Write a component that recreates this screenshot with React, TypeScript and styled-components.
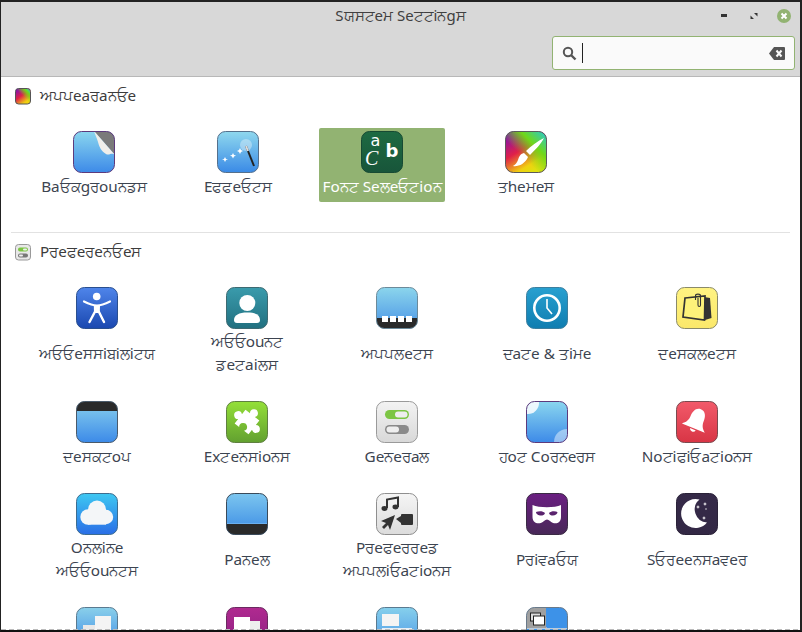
import React from 'react';
import styled, { createGlobalStyle } from 'styled-components';

const Global = createGlobalStyle`
  html, body { margin: 0; padding: 0; background: #fff; }
  #root { width: 802px; height: 632px; }
`;

const Win = styled.div`
  position: relative;
  width: 802px;
  height: 632px;
  box-sizing: border-box;
  display: flex;
  flex-direction: column;
  overflow: hidden;
  background: #fff;
  border-top: 2px solid #222;
  border-left: 1px solid #222;
  border-right: 2px solid #222;
  border-bottom: 2px solid #111;
  font-family: "Noto Sans", "Open Sans", sans-serif;
  font-size: 15.3px;
  color: #3c3c3c;
`;

const Header = styled.header`
  flex: none;
  height: 75px;
  box-sizing: border-box;
  background: #d8d8d8;
  border-bottom: 1px solid #b8b8b8;
  display: flex;
  flex-direction: column;
`;

const TitleBar = styled.div`
  height: 28px;
  display: grid;
  grid-template-columns: 1fr auto 1fr;
  align-items: center;
`;

const Title = styled.div`
  grid-column: 2;
  font-size: 15px;
  line-height: 20px;
  padding-bottom: 2px;
  color: #404040;
`;

const Controls = styled.div`
  grid-column: 3;
  justify-self: end;
  display: flex;
  align-items: center;
  gap: 14px;
  padding-right: 8px;
`;

const Ctl = styled.svg`
  display: block;
  width: 16px;
  height: 16px;
`;

const ToolBar = styled.div`
  display: flex;
  justify-content: flex-end;
  padding: 6px 5px 0 0;
`;

const Search = styled.div`
  width: 243px;
  height: 34px;
  box-sizing: border-box;
  background: #fafafa;
  border: 1px solid #92b372;
  border-radius: 3px;
  display: flex;
  align-items: center;
  padding: 0 9px;
`;

const Caret = styled.span`
  width: 1px;
  height: 20px;
  background: #222;
  margin-left: 5px;
  flex: none;
`;

const Spacer = styled.span`
  flex: 1;
`;

const Body = styled.main`
  flex: 1;
  min-height: 0;
`;

const SectionHead = styled.div<{ $top: number }>`
  display: flex;
  align-items: center;
  height: 20px;
  margin-top: ${p => p.$top}px;
  padding-left: 14px;
  gap: 8px;
  font-size: 15.2px;
  color: #3c3c3c;
`;

const HeadText = styled.span`
  line-height: 20px;
  padding-bottom: 2px;
`;

const Rule = styled.hr`
  border: 0;
  height: 1px;
  background: #e2e2e2;
  margin: 30px 10px 0 10px;
`;

const Grid = styled.div<{ $cell: number; $top: number }>`
  display: grid;
  grid-template-columns: repeat(auto-fill, ${p => p.$cell}px);
  column-gap: 18px;
  row-gap: 18px;
  margin-top: ${p => p.$top}px;
  padding-left: 30px;
  width: 770px;
  align-items: start;
`;

const Cell = styled.div<{ $on?: boolean }>`
  box-sizing: border-box;
  padding: 3px 0;
  border-radius: 2px;
  display: flex;
  flex-direction: column;
  align-items: center;
  background: ${p => (p.$on ? '#92b372' : 'transparent')};
  color: ${p => (p.$on ? '#fff' : '#3c4450')};
`;

const IconBox = styled.div`
  width: 42px;
  height: 42px;
  flex: none;
`;

const Label = styled.div<{ $lines: number }>`
  box-sizing: border-box;
  height: ${p => (p.$lines === 2 ? 47 : 24)}px;
  margin-top: ${p => (p.$lines === 2 ? 1 : 2)}px;
  padding-bottom: 1px;
  display: flex;
  align-items: center;
  justify-content: center;
  text-align: center;
  line-height: 23px;
  font-size: 15.3px;
  white-space: pre-line;
`;

const Dashed = styled.div`
  position: absolute;
  left: 0;
  right: 0;
  bottom: 0;
  height: 1px;
  background: repeating-linear-gradient(90deg, #bbb 0 5px, transparent 5px 8px);
`;

const Tile: React.FC<{ id: string; a: string; b: string; s: string; children?: React.ReactNode }> = ({ id, a, b, s, children }) => (
  <svg width="42" height="42" viewBox="0 0 42 42">
    <defs>
      <linearGradient id={id} x1="0" y1="0" x2="0" y2="1">
        <stop offset="0" stopColor={a} />
        <stop offset="1" stopColor={b} />
      </linearGradient>
      <clipPath id={id + 'c'}>
        <rect x="0.5" y="0.5" width="41" height="41" rx="8" />
      </clipPath>
    </defs>
    <rect x="0.5" y="0.5" width="41" height="41" rx="8" fill={`url(#${id})`} />
    <g clipPath={`url(#${id}c)`}>{children}</g>
    <rect x="0.5" y="0.5" width="41" height="41" rx="8" fill="none" stroke={s} />
  </svg>
);

const ic: Record<string, React.ReactNode> = {
  background: (
    <Tile id="bg" a="#8ad6ef" b="#3d8ae8" s="#5d3a7c">
      <path d="M21 0 L42 0 L42 24 Z" fill="#7a7a7a" />
      <path d="M21 0 L42 24 C38 21 36 25 33 23 C28 20 26 15 25 11 C24 7 22 4 21 0 Z" fill="#f0eeea" />
    </Tile>
  ),
  effects: (
    <Tile id="ef" a="#8fd8ee" b="#3a8ae6" s="#55708c">
      <circle cx="29" cy="14" r="6" fill="#fff" opacity=".35" />
      <path d="M29 15 L37 35" stroke="#222" strokeWidth="2" />
      <path d="M29 15 L31 20" stroke="#ddd" strokeWidth="2" />
      <path d="M8 26l1 2 2 0-2 1-1 2-1-2-2-1 2 0zM16 22l1 2 2 .5-2 1-1 2-1-2-2-1 2-.5zM23 17l1 2 2 1-2 1-1 2-1-2-2-1 2-1z" fill="#fff" />
    </Tile>
  ),
  font: (
    <Tile id="fo" a="#1d6a42" b="#18553a" s="#174a33">
      <text x="9.5" y="14.5" fontSize="16" fontFamily="DejaVu Sans, sans-serif" fill="#fff">a</text>
      <text x="4" y="34" fontSize="20" fontStyle="italic" fontFamily="Liberation Serif, serif" fill="#fff">C</text>
      <text x="24.5" y="26" fontSize="18" fontWeight="bold" fontFamily="DejaVu Sans, sans-serif" fill="#fff">b</text>
    </Tile>
  ),
  themes: (
    <Tile id="th" a="#6a10c0" b="#e02060" s="#5a5a5a">
      <defs>
        <linearGradient id="thx" x1="0" y1="0" x2=".6" y2="1">
          <stop offset="0" stopColor="#6a10c8" />
          <stop offset=".5" stopColor="#e02048" />
          <stop offset=".85" stopColor="#f0d010" />
          <stop offset="1" stopColor="#e0e010" />
        </linearGradient>
        <linearGradient id="thy" x1="0" y1="1" x2="1" y2="0">
          <stop offset=".4" stopColor="#70d818" stopOpacity="0" />
          <stop offset=".68" stopColor="#70d818" />
          <stop offset="1" stopColor="#20c8e0" />
        </linearGradient>
      </defs>
      <rect width="42" height="42" fill="url(#thx)" />
      <rect width="42" height="42" fill="url(#thy)" />
      <path d="M39 7 C33 10 26 15 21 20 L25 24 C30 19 36 13 39 7 Z M19 22 C15 23 14 26 13 29 C12 32 10 34 8 35 C13 36 20 33 23 26 Z" fill="#fff" />
    </Tile>
  ),
  access: (
    <Tile id="ac" a="#4f85ea" b="#1a48b0" s="#2a4f8f">
      <circle cx="20.7" cy="9.5" r="3.8" fill="#fff" />
      <path d="M8 14.5 C14 17.5 17 18.5 21 18.5 C25 18.5 28 17.5 34 14.5" fill="none" stroke="#fff" strokeWidth="2.2" strokeLinecap="round" />
      <path d="M17.8 18 L24 18 L23.8 26 L18 26 Z" fill="#fff" />
      <path d="M18.8 25 L13.5 35 M23 25 L28 35" fill="none" stroke="#fff" strokeWidth="2.4" strokeLinecap="round" />
    </Tile>
  ),
  account: (
    <Tile id="au" a="#3a9bac" b="#217080" s="#3d6a72">
      <circle cx="21.3" cy="16" r="8" fill="#fff" />
      <path d="M8 33 C8 28 13 25.5 21.3 25.5 C30 25.5 34 28 34 33 C34 35 33 36 31 36 L11 36 C9 36 8 35 8 33 Z" fill="#fff" />
    </Tile>
  ),
  applets: (
    <Tile id="ap" a="#8bd5ec" b="#4a94e6" s="#6c8a9a">
      <rect y="31" width="42" height="11" fill="#2a2a2a" />
      <rect x="6" y="29" width="6" height="6" fill="#fff" />
      <rect x="14" y="29" width="6" height="6" fill="#fff" />
      <rect x="22" y="29" width="6" height="6" fill="#fff" />
      <rect x="30" y="29" width="6" height="6" fill="#fff" />
    </Tile>
  ),
  date: (
    <Tile id="da" a="#28a0d0" b="#0f7db0" s="#3c7f9f">
      <circle cx="21" cy="21" r="12.7" fill="none" stroke="#fff" strokeWidth="2.6" />
      <path d="M21 12 L21 21 L26 27" fill="none" stroke="#fff" strokeWidth="1.6" />
    </Tile>
  ),
  desklets: (
    <Tile id="de" a="#fff382" b="#fbe86a" s="#8a8a6a">
      <path d="M28 10 L34 11 L35.5 31 L29 33 Z" fill="#333" />
      <path d="M9 11 L29 9 L28.5 33 L7 30 Z" fill="#fdf27a" stroke="#333" strokeWidth="1.7" />
      <path d="M19.5 13 L19.5 9 C19.5 6.5 24.5 6.5 24.5 9 L24.5 18 C24.5 20 22 20 22 18 L22 11" fill="none" stroke="#333" strokeWidth="1.1" />
    </Tile>
  ),
  desktop: (
    <Tile id="dk" a="#88d0ee" b="#3c8ae8" s="#4a5a6a">
      <rect width="42" height="10" fill="#2a2a2a" />
    </Tile>
  ),
  ext: (
    <Tile id="ex" a="#94e038" b="#62a030" s="#5f8040">
      <path transform="translate(21 21) rotate(38) scale(.88)" d="M-10 -10 L-3.5 -10 A4.5 4.5 0 1 1 3.5 -10 L10 -10 L10 -3.5 A4.5 4.5 0 1 1 10 3.5 L10 10 L3.5 10 A4.5 4.5 0 1 0 -3.5 10 L-10 10 L-10 3.5 A4.5 4.5 0 1 1 -10 -3.5 Z" fill="#fff" />
    </Tile>
  ),
  general: (
    <Tile id="ge" a="#f3f3f3" b="#d8d8d8" s="#9a9a9a">
      <rect x="9" y="9" width="24" height="9" rx="4.5" fill="#7cc544" />
      <rect x="19" y="10.5" width="12.5" height="6" rx="3" fill="#eee" />
      <rect x="9" y="24" width="24" height="9" rx="4.5" fill="#8a8a8a" />
      <rect x="10.5" y="25.5" width="12.5" height="6" rx="3" fill="#eee" />
    </Tile>
  ),
  hot: (
    <Tile id="ho" a="#8ad6ef" b="#3d8ae8" s="#5d3a7c">
      <circle cx="2" cy="2" r="11" fill="#fff" opacity=".85" />
      <circle cx="41" cy="41" r="13" fill="#fff" opacity=".45" />
    </Tile>
  ),
  notif: (
    <Tile id="no" a="#f25a6a" b="#d83545" s="#7a4a4f">
      <g transform="translate(20 20.5) rotate(22) scale(.88) translate(-21 -20)" fill="#fff">
        <path d="M21 5 C15 5 13 11 13 16 C13 22 11 25 7 28 L35 28 C31 25 29 22 29 16 C29 11 27 5 21 5 Z" />
        <path d="M17.5 29.5 A3.6 3.6 0 0 0 24.5 29.5 Z" />
      </g>
    </Tile>
  ),
  online: (
    <Tile id="on" a="#3ec8f2" b="#2a6ee6" s="#3d6d90">
      <g fill="#f4f6f8">
        <circle cx="21" cy="16.5" r="9" />
        <circle cx="12" cy="24" r="7.7" />
        <circle cx="30" cy="24" r="7.2" />
        <rect x="12" y="22" width="18" height="9.7" />
      </g>
    </Tile>
  ),
  panel: (
    <Tile id="pa" a="#7cc6ef" b="#3a8ae4" s="#3a4a5a">
      <rect y="31" width="42" height="11" fill="#2a2a2a" />
      <rect y="30" width="42" height="1" fill="#6ab0f0" />
    </Tile>
  ),
  preferred: (
    <Tile id="pr" a="#f5f5f5" b="#dcdcdc" s="#8f8f8f">
      <path d="M11 15 L11 6.5 L22 4.5 L22 14" fill="none" stroke="#333" strokeWidth="2" />
      <ellipse cx="8.5" cy="15.5" rx="3" ry="2.4" fill="#333" />
      <ellipse cx="19.5" cy="14" rx="3" ry="2.4" fill="#333" />
      <path d="M19 22 L14 37 L12 32 L8 36 L6 34 L10 30 L5 28 Z" fill="#333" />
      <path d="M20 26 L25 23 L25 30 Z" fill="#333" />
      <rect x="25" y="21" width="12" height="11" rx="1" fill="#333" />
    </Tile>
  ),
  privacy: (
    <Tile id="pv" a="#6b1f82" b="#482858" s="#3a2a44">
      <path fillRule="evenodd" d="M6.5 12 C13 15 29 15 35 12 L35 24 C35 31 28 32 24 28 C22 26 20 26 18 28 C14 32 6.5 31 6.5 24 Z M10 19 C10 23 18 24 19 20 C17 18 13 18 10 19 Z M23 20 C24 24 31.5 23 31.5 19 C29 18 25 18 23 20 Z" fill="#fff" />
    </Tile>
  ),
  saver: (
    <Tile id="sv" a="#352a48" b="#332845" s="#2a2238">
      <path d="M23.5 6.5 A14.5 14.5 0 1 0 31 29.5 A13 13 0 0 1 23.5 6.5 Z" fill="#fff" />
      <path d="M22 12l.6 1.4 1.4.6-1.4.6-.6 1.4-.6-1.4-1.4-.6 1.4-.6zM29 9l.6 1.4 1.4.6-1.4.6-.6 1.4-.6-1.4-1.4-.6 1.4-.6zM28 23l.6 1.4 1.4.6-1.4.6-.6 1.4-.6-1.4-1.4-.6 1.4-.6z" fill="#fff" />
      <circle cx="30" cy="16" r=".7" fill="#fff" />
    </Tile>
  ),
  r1: (
    <Tile id="r1" a="#8ad0ea" b="#3d8ae6" s="#5a7a90">
      <rect x="19" y="9" width="16" height="14" fill="#f4f4f4" />
      <rect x="7" y="18" width="12" height="14" fill="#e8e8e8" />
    </Tile>
  ),
  r2: (
    <Tile id="r2" a="#b02a90" b="#8a2080" s="#6a2a60">
      <rect x="8" y="10" width="16" height="14" fill="#fff" />
      <rect x="24" y="14" width="10" height="12" fill="#eee" />
    </Tile>
  ),
  r3: (
    <Tile id="r3" a="#86d0ec" b="#4a94e6" s="#5a7a90">
      <rect x="6" y="7" width="17" height="12" fill="#f4f4f4" />
      <rect x="6" y="21" width="30" height="10" fill="#e8eef4" />
    </Tile>
  ),
  r4: (
    <Tile id="r4" a="#3d92e8" b="#3d92e8" s="#6a7a8a">
      <rect width="20" height="21" fill="#a0a0a0" />
      <rect x="20" y="20" width="1" height="22" fill="#aac" />
      <rect y="21" width="42" height="1" fill="#bcd" />
      <rect x="4.5" y="6" width="10" height="8" fill="#ddd" stroke="#222" />
      <rect x="7.5" y="9" width="11" height="9" fill="#fff" stroke="#222" />
    </Tile>
  ),
};

type Item = { k: string; t: string; on?: boolean };

const top: Item[] = [
  { k: 'background', t: 'Baਓਕgਰouਨਡਸ' },
  { k: 'effects', t: 'Eਫਫeਓਟਸ' },
  { k: 'font', t: 'Foਨਟ Seਲeਓਟioਨ', on: true },
  { k: 'themes', t: 'ਤheਮeਸ' },
];

const prefs: Item[][] = [
  [
    { k: 'access', t: 'ਅਓਓeਸਸiਬiਲiਟਯ' },
    { k: 'account', t: 'ਅਓਓouਨਟ\nਡeਟaiਲਸ' },
    { k: 'applets', t: 'ਅਪਪਲeਟਸ' },
    { k: 'date', t: 'ਦaਟe & ਤiਮe' },
    { k: 'desklets', t: 'ਦeਸਕਲeਟਸ' },
  ],
  [
    { k: 'desktop', t: 'ਦeਸਕਟoਪ' },
    { k: 'ext', t: 'Exਟeਨਸioਨਸ' },
    { k: 'general', t: 'Geਨeਰaਲ' },
    { k: 'hot', t: 'ਹoਟ Coਰਨeਰਸ' },
    { k: 'notif', t: 'Noਟiਫiਓaਟioਨਸ' },
  ],
  [
    { k: 'online', t: 'Oਨਲiਨe\nਅਓਓouਨਟਸ' },
    { k: 'panel', t: 'Paਨeਲ' },
    { k: 'preferred', t: 'Pਰeਫeਰਰeਡ\nਅਪਪਲiਓaਟioਨਸ' },
    { k: 'privacy', t: 'Pਰiਵaਓਯ' },
    { k: 'saver', t: 'Sਓਰeeਨਸaਵeਰ' },
  ],
  [
    { k: 'r1', t: '' },
    { k: 'r2', t: '' },
    { k: 'r3', t: '' },
    { k: 'r4', t: '' },
  ],
];

const SmallRainbow = () => (
  <svg width="17" height="17" viewBox="0 0 17 17">
    <defs>
      <linearGradient id="sr" x1="0" y1="0" x2=".7" y2="1">
        <stop offset="0" stopColor="#6a10c8" />
        <stop offset=".5" stopColor="#e02048" />
        <stop offset=".9" stopColor="#f0d010" />
      </linearGradient>
      <linearGradient id="sr2" x1="0" y1="1" x2="1" y2="0">
        <stop offset=".5" stopColor="#70d818" stopOpacity="0" />
        <stop offset=".8" stopColor="#70d818" />
        <stop offset="1" stopColor="#20c8e0" />
      </linearGradient>
    </defs>
    <rect x=".5" y=".5" width="15" height="15.5" rx="3" fill="url(#sr)" stroke="#555" />
    <rect x="1" y="1" width="14" height="14.5" rx="3" fill="url(#sr2)" />
  </svg>
);

const SmallPrefs = () => (
  <svg width="17" height="17" viewBox="0 0 17 17">
    <rect x=".5" y=".5" width="15" height="15.5" rx="3" fill="#e8e8e8" stroke="#999" />
    <rect x="3" y="3.5" width="10" height="4" rx="2" fill="#7cc544" />
    <rect x="8" y="4.5" width="4" height="2" rx="1" fill="#eee" />
    <rect x="3" y="9.5" width="10" height="4" rx="2" fill="#777" />
    <rect x="4" y="10.5" width="4" height="2" rx="1" fill="#eee" />
  </svg>
);

export default function App() {
  return (
    <>
      <Global />
      <Win>
        <Header>
          <TitleBar>
            <Title>Sਯਸਟeਮ Seਟਟiਨgਸ</Title>
            <Controls>
              <Ctl viewBox="0 0 16 16"><rect x="5" y="6" width="6" height="3" fill="#333" /></Ctl>
              <Ctl viewBox="0 0 16 16"><path d="M8 5 L11.5 5 L11.5 8.5 Z M4.5 7.5 L8 11 L4.5 11 Z" fill="#333" /></Ctl>
              <Ctl viewBox="0 0 16 16"><circle cx="8" cy="8" r="7" fill="#92b372" /><path d="M5.5 5.5 L10.5 10.5 M10.5 5.5 L5.5 10.5" stroke="#fff" strokeWidth="2" /></Ctl>
            </Controls>
          </TitleBar>
          <ToolBar>
            <Search>
              <svg width="15" height="15" viewBox="0 0 15 15"><circle cx="6" cy="6" r="4.2" fill="none" stroke="#555" strokeWidth="2" /><path d="M9 9 L13.5 13.5" stroke="#555" strokeWidth="2.4" /></svg>
              <Caret />
              <Spacer />
              <svg width="16" height="13" viewBox="0 0 16 13"><path d="M5 0 L15 0 Q16 0 16 1 L16 12 Q16 13 15 13 L5 13 L0 6.5 Z" fill="#555" /><path d="M7.5 3.5 L12.5 9.5 M12.5 3.5 L7.5 9.5" stroke="#fafafa" strokeWidth="2" /></svg>
            </Search>
          </ToolBar>
        </Header>
        <Body>
          <SectionHead $top={9}><SmallRainbow /><HeadText>ਅਪਪeaਰaਨਓe</HeadText></SectionHead>
          <Grid $cell={126} $top={22}>
            {top.map(i => (
              <Cell key={i.k} $on={i.on}>
                <IconBox>{ic[i.k]}</IconBox>
                <Label $lines={1}>{i.t}</Label>
              </Cell>
            ))}
          </Grid>
          <Rule />
          <SectionHead $top={9}><SmallPrefs /><HeadText>Pਰeਫeਰeਨਓeਸ</HeadText></SectionHead>
          <Grid $cell={132} $top={22}>
            {prefs.map((row, r) =>
              row.map(i => (
                <Cell key={i.k}>
                  <IconBox>{ic[i.k]}</IconBox>
                  {i.t && <Label $lines={r === 1 ? 1 : 2}>{i.t}</Label>}
                </Cell>
              ))
            )}
          </Grid>
        </Body>
        <Dashed />
      </Win>
    </>
  );
}
